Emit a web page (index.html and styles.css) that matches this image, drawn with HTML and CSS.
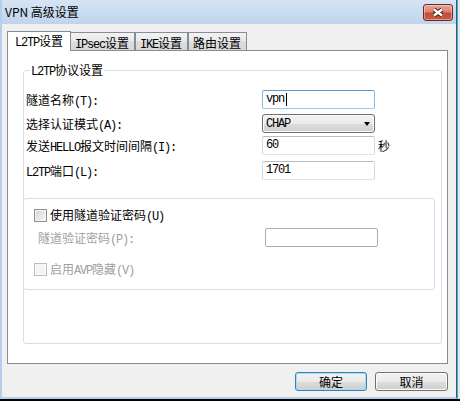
FILE: index.html
```html
<!DOCTYPE html>
<html lang="zh-CN">
<head>
<meta charset="utf-8">
<title>VPN 高级设置</title>
<link rel="stylesheet" href="styles.css">
</head>
<body>
<div class="desktop">
  <div class="window">
    <div class="titlebar">
      <span class="title">VPN 高级设置</span>
      <div class="close">
        <svg width="28" height="15" viewBox="0 0 28 15">
          <path d="M10 4.5 L18 10.5 M18 4.5 L10 10.5" stroke="#4a1f1a" stroke-width="4.6" fill="none"/>
          <path d="M10 4.5 L18 10.5 M18 4.5 L10 10.5" stroke="#ffffff" stroke-width="2.4" fill="none"/>
        </svg>
      </div>
    </div>
    <div class="client">
      <div class="tabs">
        <div class="tab active"><span class="en">L2TP</span>设置</div>
        <div class="tab"><span class="en">IPsec</span>设置</div>
        <div class="tab"><span class="en">IKE</span>设置</div>
        <div class="tab">路由设置</div>
      </div>
      <div class="panel">
        <div class="group">
          <div class="group-title"><span class="en">L2TP</span>协议设置</div>
          <div class="form">
            <div class="label">隧道名称<span class="en">(T):</span></div>
            <div class="field focused"><span class="en">vpn</span><span class="caret"></span></div>
            <div></div>

            <div class="label">选择认证模式<span class="en">(A):</span></div>
            <div class="select"><span class="en">CHAP</span><span class="arrow"></span></div>
            <div></div>

            <div class="label">发送<span class="en">HELLO</span>报文时间间隔<span class="en">(I):</span></div>
            <div class="field"><span class="en">60</span></div>
            <div class="suffix">秒</div>

            <div class="label"><span class="en">L2TP</span>端口<span class="en">(L):</span></div>
            <div class="field"><span class="en">1701</span></div>
            <div></div>
          </div>
          <div class="subgroup">
            <div class="check-row">
              <span class="checkbox"></span>
              <span class="check-label">使用隧道验证密码<span class="en">(U)</span></span>
            </div>
            <div class="pass-row">
              <div class="label disabled">隧道验证密码<span class="en">(P):</span></div>
              <div class="field disabled-field"></div>
            </div>
            <div class="check-row third">
              <span class="checkbox off"></span>
              <span class="check-label disabled">启用<span class="en">AVP</span>隐藏<span class="en">(V)</span></span>
            </div>
          </div>
        </div>
      </div>
      <div class="buttons">
        <div class="btn default">确定</div>
        <div class="btn cancel">取消</div>
      </div>
    </div>
  </div>
  <div class="edge"></div>
</div>
</body>
</html>
```

FILE: styles.css
```css
* { box-sizing: border-box; }
html, body { margin: 0; padding: 0; }
body {
  width: 460px;
  height: 401px;
  overflow: hidden;
  background: #000;
  font-family: "Noto Sans CJK SC", "Noto Sans", sans-serif;
  font-size: 12px;
  color: #000;
}
.en {
  font-family: "Liberation Mono", monospace;
  font-size: 12px;
  letter-spacing: -1.2px;
}
.desktop {
  display: flex;
  height: 399px;
  background: #ececec;
}
.window {
  width: 457px;
  height: 399px;
  border-left: 2px solid #b7cfeb;
  border-right: 1px solid #4b535c;
  border-bottom: 2px solid #b7cfeb;
  display: flex;
  flex-direction: column;
}
.titlebar {
  height: 24px;
  flex: none;
  display: flex;
  justify-content: space-between;
  align-items: flex-start;
  padding: 0 3px 0 3px;
  background: linear-gradient(#d6e4f4, #bfd4ec);
}
.title {
  line-height: 23px;
  font-size: 12px;
}
.close {
  width: 30px;
  height: 17px;
  margin-top: 4px;
  border: 1px solid #6a2b25;
  border-radius: 3px;
  background: linear-gradient(#e7a89b, #d98373 45%, #c54b37 55%, #cc5c45);
  box-shadow: inset 0 0 0 1px rgba(255, 230, 220, 0.45);
}
.close svg { display: block; }
.client {
  flex: 1;
  background: #f0f0f0;
  padding: 7px 8px 0 5px;
}
.tabs {
  display: flex;
  align-items: flex-end;
  height: 19px;
}
.tab {
  height: 18px;
  border: 1px solid #898c95;
  border-bottom: 0;
  padding: 3px 5px 0 4px;
  line-height: 14px;
  white-space: nowrap;
  background: linear-gradient(#f3f3f3, #e9e9e9 45%, #dcdcdc 55%, #d8d8d8);
}
.tab.active {
  height: 20px;
  margin: 0 -1px -1px 0;
  padding: 1px 7px 0 7px;
  line-height: 16px;
  background: #fff;
  position: relative;
  z-index: 1;
}
.panel {
  height: 314px;
  border: 1px solid #898c95;
  background: #fff;
  padding: 19px 5px 0 15px;
}
.group {
  height: 274px;
  border: 1px solid #d5dfe5;
  border-radius: 3px;
}
.group-title {
  width: max-content;
  margin: -8px 0 0 6px;
  padding: 0 1px;
  line-height: 14px;
  background: #fff;
}
.form {
  display: grid;
  grid-template-columns: 236px 113px auto;
  grid-template-rows: 24px 22px 25px 19px;
  align-items: start;
  margin-top: 11px;
  padding-left: 2px;
}
.label {
  line-height: 19px;
  white-space: nowrap;
}
.field {
  height: 19px;
  border: 1px solid;
  border-color: #b5bec8 #d3dae2 #dde3ea #d3dae2;
  border-radius: 2px;
  background: #fff;
  padding: 0 3px;
  line-height: 17px;
  display: flex;
  align-items: center;
}
.field.focused {
  border-color: #5e9ad2 #86b9e6 #9cc8ee #86b9e6;
}
.caret {
  display: inline-block;
  width: 1px;
  height: 13px;
  background: #000;
  margin-left: 2px;
}
.select {
  height: 19px;
  border: 1px solid #707070;
  border-radius: 3px;
  background: linear-gradient(#f2f2f2, #ebebeb 50%, #dddddd 50%, #cfcfcf);
  box-shadow: inset 0 0 0 1px #fafafa;
  padding: 0 4px 0 3px;
  display: flex;
  justify-content: space-between;
  align-items: center;
}
.arrow {
  width: 0;
  height: 0;
  border-left: 3.5px solid transparent;
  border-right: 3.5px solid transparent;
  border-top: 4px solid #000;
}
.suffix {
  line-height: 19px;
  padding-left: 3px;
}
.subgroup {
  height: 92px;
  margin: 18px 6px 0 -1px;
  border: 1px solid #d5dfe5;
  border-radius: 3px;
  padding: 10px 0 0 10px;
}
.check-row {
  display: flex;
  align-items: center;
  gap: 3px;
  height: 13px;
}
.check-row.third { margin-top: 13px; }
.checkbox {
  width: 13px;
  height: 13px;
  flex: none;
  border: 1px solid #8e8f8f;
  background: linear-gradient(135deg, #d4d4d4, #f7f7f7);
  box-shadow: inset 0 0 0 1px #f4f4f4;
}
.checkbox.off {
  border-color: #bcbcbc;
  background: #f4f4f4;
  box-shadow: inset 0 0 0 1px #fbfbfb;
}
.check-label {
  line-height: 13px;
  white-space: nowrap;
}
.disabled { color: #a0a0a0; }
.pass-row {
  display: grid;
  grid-template-columns: 231px 113px;
  margin-top: 6px;
}
.pass-row .label { padding-left: 4px; }
.disabled-field {
  border-color: #adadad;
}
.buttons {
  display: flex;
  justify-content: flex-end;
  gap: 8px;
  margin-top: 8px;
}
.btn {
  height: 19px;
  width: 73px;
  border: 1px solid #707070;
  border-radius: 3px;
  background: linear-gradient(#f2f2f2, #ebebeb 50%, #dddddd 50%, #cfcfcf);
  box-shadow: inset 0 0 0 1px #fbfbfb;
  text-align: center;
  line-height: 17px;
}
.btn.default {
  width: 72px;
  border-color: #3c7fb1;
  box-shadow: inset 0 0 0 1px #a7dcf5;
}
.edge {
  width: 3px;
  height: 399px;
  background: linear-gradient(to right, #2eb3e8 0, #2eb3e8 1px, #e6e6e6 1px);
}
```
